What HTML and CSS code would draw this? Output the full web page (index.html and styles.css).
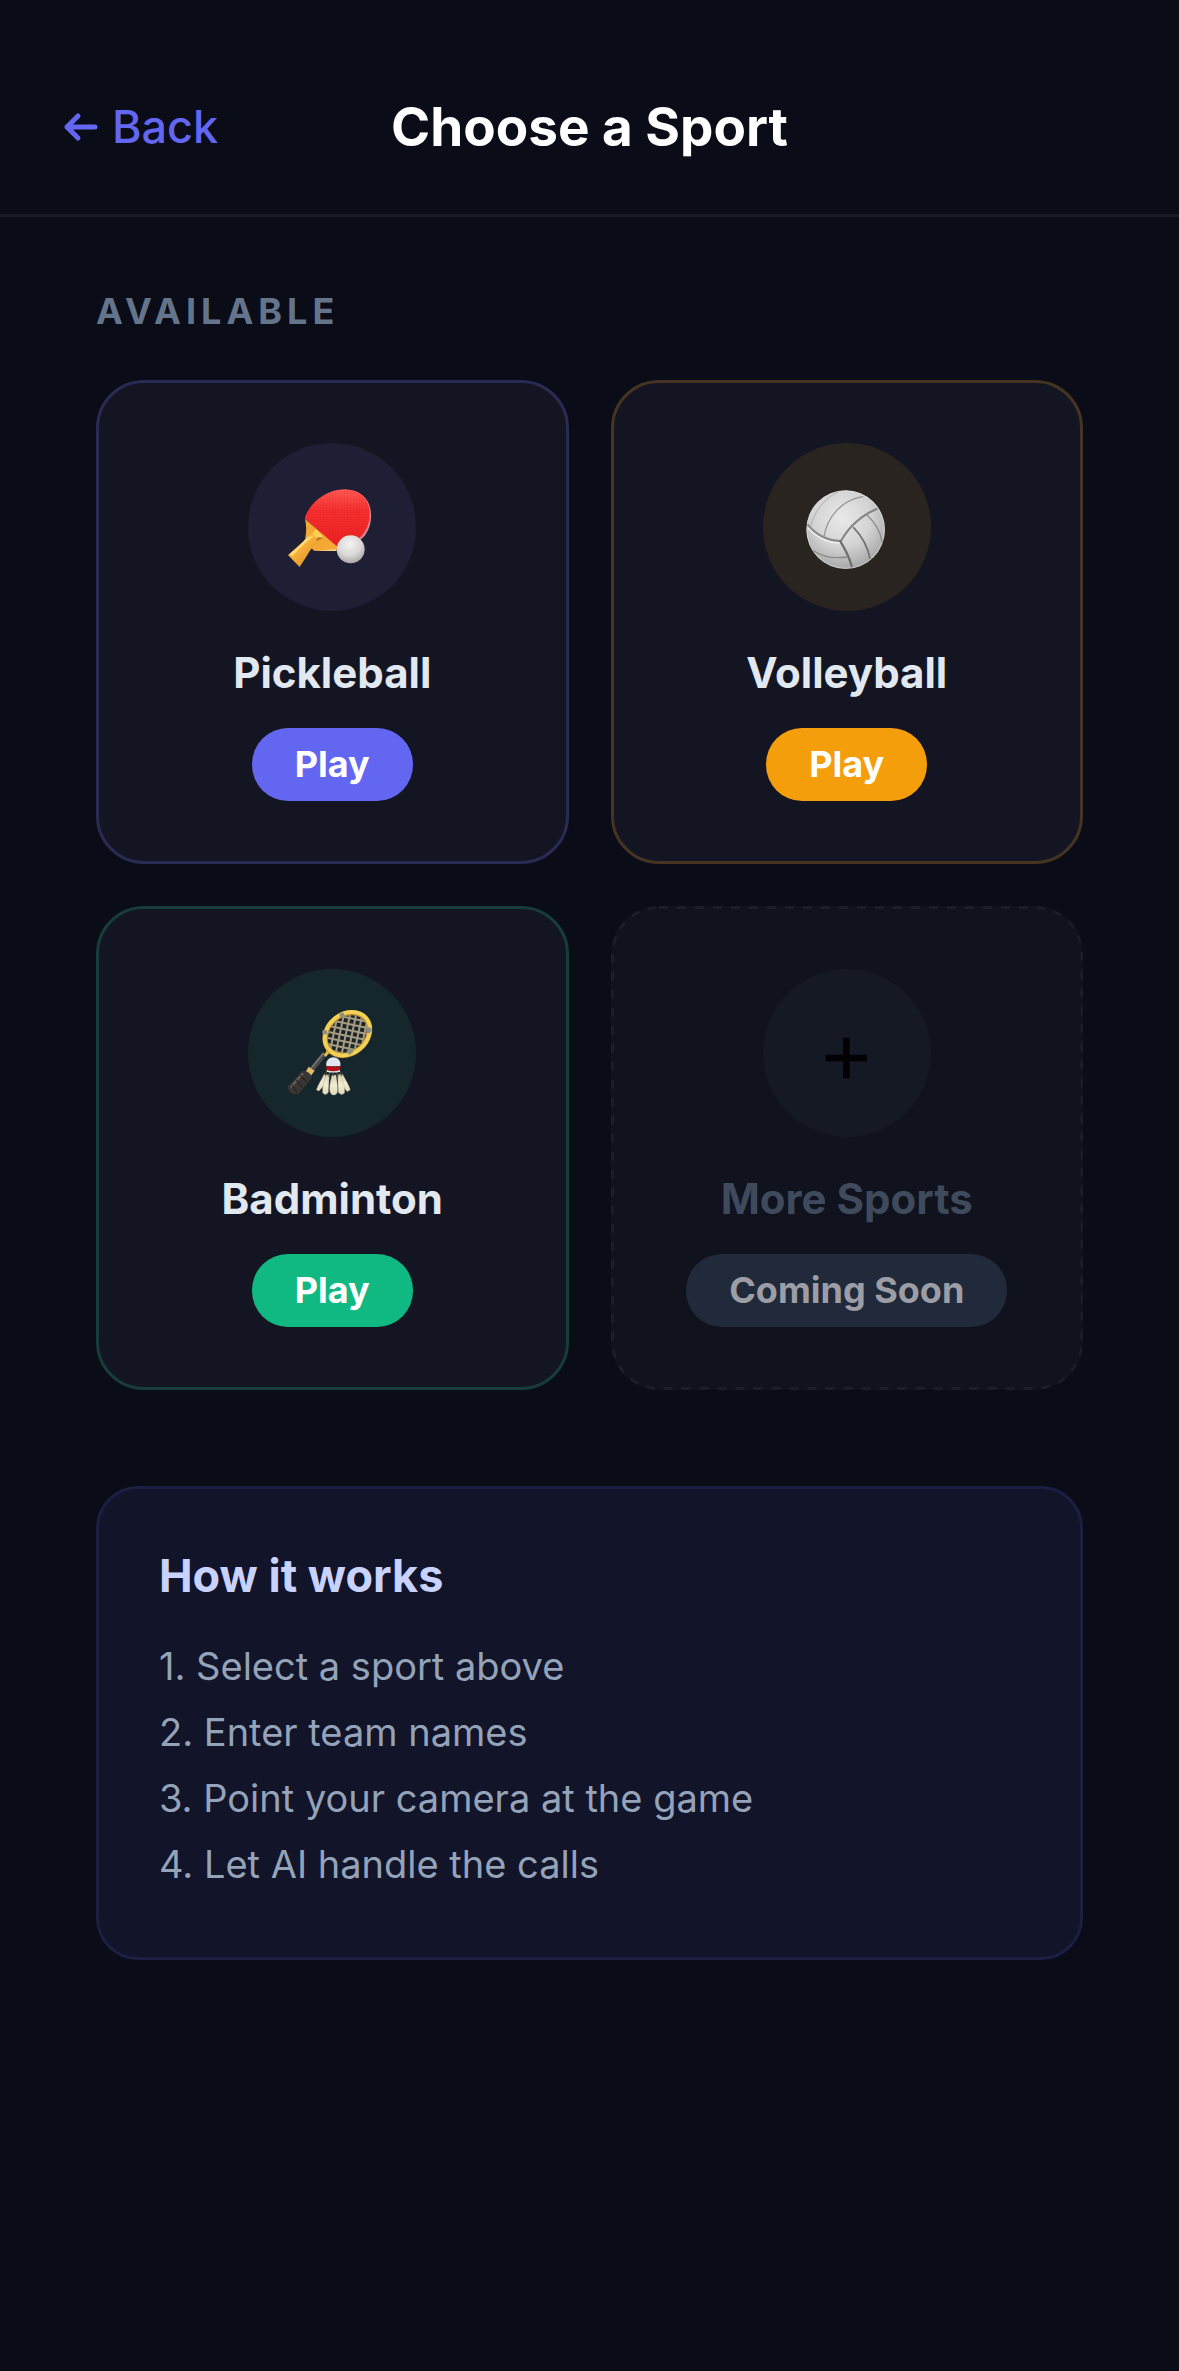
FILE: index.html
```html
<!DOCTYPE html>
<html lang="en">
<head>
    <meta charset="utf-8">
    <meta name="viewport" content="width=device-width, initial-scale=1">
    <title>Choose a Sport</title>
    <link rel="stylesheet" href="styles.css">
</head>
<body>
    <header class="header">
        <a class="back" href="#">
            <svg class="backArrow" viewBox="0 0 36 30" aria-hidden="true">
                <path d="M32 15H4M15 4L4 15L15 26"/>
            </svg>
            <span>Back</span>
        </a>
        <h1 class="title">Choose a Sport</h1>
    </header>
    <main class="content">
        <h2 class="sectionLabel">AVAILABLE</h2>
        <div class="sportGrid">
            <section class="card pickleball">
                <div class="icon">
                    <svg viewBox="54 38 504 504" aria-hidden="true">
                        <defs>
                            <linearGradient id="rubber" x1="0" y1="0" x2="0" y2="1">
                                <stop offset="0" stop-color="#ff5a55"/>
                                <stop offset="0.35" stop-color="#f5302f"/>
                                <stop offset="1" stop-color="#ec1f20"/>
                            </linearGradient>
                            <linearGradient id="wood" x1="0" y1="0" x2="1" y2="1">
                                <stop offset="0" stop-color="#ffd65c"/>
                                <stop offset="0.5" stop-color="#f3a935"/>
                                <stop offset="1" stop-color="#c98024"/>
                            </linearGradient>
                            <radialGradient id="smallBall" cx="0.45" cy="0.3" r="0.7">
                                <stop offset="0" stop-color="#f4f3f2"/>
                                <stop offset="0.6" stop-color="#d9d8d6"/>
                                <stop offset="1" stop-color="#aaa8a5"/>
                            </radialGradient>
                            <pattern id="dots" width="9" height="7" patternUnits="userSpaceOnUse">
                                <rect width="4" height="2" fill="#c9151b" opacity="0.45"/>
                            </pattern>
                        </defs>
                        <path d="M345 178C400 178 426 215 423 263C421 292 410 313 393 327L330 359L228 266C245 217 291 178 345 178Z" fill="#d9868c"/>
                        <path d="M343 177C396 177 422 212 419 258C417 290 402 314 375 336L325 353L224 264C238 217 290 177 343 177Z" fill="url(#rubber)"/>
                        <path d="M343 177C396 177 422 212 419 258C417 290 402 314 375 336L325 353L224 264C238 217 290 177 343 177Z" fill="url(#dots)"/>
                        <path d="M225 266L322 349L319 362L252 361L232 340L226 322C230 302 229 284 225 266Z" fill="#f5a833"/>
                        <path d="M257 303L282 323C258 340 242 354 234 371L209 410L174 374C195 357 214 345 226 325C234 315 246 309 257 303Z" fill="url(#wood)"/>
                        <path d="M258 296L282 322L262 324L246 312Z" fill="#ffd055"/>
                        <path d="M282 322L258 332L263 321Z" fill="#b37420"/>
                        <path d="M179 370L208 344L235 319L253 317C231 331 214 351 187 378Z" fill="#ffd86b"/>
                        <path d="M252 361L319 357L319 362Z" fill="#ffd48b"/>
                        <circle cx="362" cy="357" r="42" fill="url(#smallBall)"/>
                    </svg>
                </div>
                <h3 class="name">Pickleball</h3>
                <button class="playBtn" type="button">Play</button>
            </section>
            <section class="card volleyball">
                <div class="icon">
                    <svg viewBox="39 38 504 504" aria-hidden="true">
                        <defs>
                            <radialGradient id="bigBall" cx="0.45" cy="0.35" r="0.68">
                                <stop offset="0" stop-color="#e9e9e9"/>
                                <stop offset="0.55" stop-color="#d3d3d3"/>
                                <stop offset="1" stop-color="#a3a3a3"/>
                            </radialGradient>
                        </defs>
                        <circle cx="287" cy="298" r="118" fill="url(#bigBall)"/>
                        <circle cx="287" cy="298" r="116" fill="none" stroke="#e0e0e0" stroke-width="3" opacity="0.6"/>
                        <g fill="none" stroke-linecap="round">
                            <path d="M276 338C242 339 202 325 176 293" stroke="#f2f2f2" stroke-width="5"/>
                            <path d="M273 331C296 292 330 257 380 236" stroke="#858585" stroke-width="6"/>
                            <path d="M272 332C235 331 200 315 174 284" stroke="#8a8a8a" stroke-width="6"/>
                            <path d="M271 333C284 354 298 379 305 408" stroke="#707070" stroke-width="7"/>
                            <path d="M222 318C231 264 271 210 338 199" stroke="#979797" stroke-width="4"/>
                            <path d="M182 289C192 247 219 205 266 184" stroke="#b0b0b0" stroke-width="3"/>
                            <path d="M311 292C336 318 353 349 360 384" stroke="#727272" stroke-width="5"/>
                            <path d="M352 255C375 277 391 304 396 334" stroke="#8a8a8a" stroke-width="4"/>
                            <path d="M191 362C222 382 257 385 291 380" stroke="#898989" stroke-width="4"/>
                        </g>
                    </svg>
                </div>
                <h3 class="name">Volleyball</h3>
                <button class="playBtn" type="button">Play</button>
            </section>
            <section class="card badminton">
                <div class="icon">
                    <svg viewBox="54 26 504 504" aria-hidden="true">
                        <defs>
                            <pattern id="strings" width="18" height="18" patternUnits="userSpaceOnUse" patternTransform="rotate(52)">
                                <path d="M0 9H18M9 0V18" fill="none" stroke="#a79d84" stroke-width="6"/>
                            </pattern>
                            <linearGradient id="feather" x1="0" y1="0" x2="0" y2="1">
                                <stop offset="0" stop-color="#d5ceb0"/>
                                <stop offset="0.5" stop-color="#f1edd2"/>
                                <stop offset="1" stop-color="#dfd9b8"/>
                            </linearGradient>
                        </defs>
                        <path d="M284 280L247 326" stroke="#4c4a4b" stroke-width="15"/>
                        <path d="M281 278L243 324" stroke="#817d7b" stroke-width="4"/>
                        <path d="M281 284C291 276 291 265 288 255L312 278C301 276 295 279 288 290Z" fill="#e5bd4e"/>
                        <ellipse cx="352" cy="222" rx="73" ry="56" transform="rotate(-40 352 222)" fill="#1b2426"/>
                        <ellipse cx="351" cy="221" rx="68" ry="52" transform="rotate(-40 351 221)" fill="url(#strings)"/>
                        <ellipse cx="352" cy="221" rx="72" ry="58" transform="rotate(-40 352 221)" fill="none" stroke="#b38932" stroke-width="16"/>
                        <ellipse cx="352" cy="220" rx="73" ry="59" transform="rotate(-40 352 220)" fill="none" stroke="#f2cf55" stroke-width="12"/>
                        <path d="M330 167L342 162M284 222L284 210M353 278L366 269M412 216L421 203" stroke="#8f8c80" stroke-width="14"/>
                        <path d="M236 319L254 331L240 350L225 337Z" fill="#dfbd68"/>
                        <path d="M216 332C228 329 242 339 247 351L207 400C192 407 174 396 173 379Z" fill="#393532"/>
                        <path d="M219 339L182 381" stroke="#68615b" stroke-width="6" fill="none"/>
                        <path d="M210 344L230 365M198 358L216 380M185 373L201 397" stroke="#191818" stroke-width="3" fill="none"/>
                        <g fill="url(#feather)" stroke="#a69f81" stroke-width="1">
                            <path d="M292 343L282 342C276 356 264 374 259 389L267 392C281 379 290 360 295 347Z"/>
                            <path d="M328 342L338 342C345 356 357 374 361 388L352 394C339 382 329 361 325 347Z"/>
                            <path d="M298 342L287 348C281 366 276 383 278 397C284 405 291 403 295 396Z"/>
                            <path d="M323 342L334 348C340 366 345 383 344 397C338 405 330 403 325 396Z"/>
                            <path d="M306 344H318C320 362 326 386 321 399C316 406 306 406 302 399C295 386 302 362 306 344Z"/>
                        </g>
                        <path d="M290 333L286 346M299 333L297 349M310 333V347M321 333L323 349M330 333L335 346" stroke="#4f473b" stroke-width="4"/>
                        <path d="M289 318C286 302 297 291 310 291C323 291 334 302 331 318Z" fill="#e2e6ef"/>
                        <path d="M289 316Q310 322 331 316L330 330Q310 336 290 330Z" fill="#b90d17"/>
                        <path d="M290 329Q310 337 330 329V334Q310 339 290 334Z" fill="#e9e3dd"/>
                    </svg>
                </div>
                <h3 class="name">Badminton</h3>
                <button class="playBtn" type="button">Play</button>
            </section>
            <section class="card more">
                <svg class="dashes" aria-hidden="true">
                    <rect width="100%" height="100%" rx="48"/>
                </svg>
                <div class="icon">
                    <svg viewBox="489 237 504 504" aria-hidden="true">
                        <path d="M677 504H801M739 443V565" stroke="#020206" stroke-width="20"/>
                    </svg>
                </div>
                <h3 class="name">More Sports</h3>
                <button class="playBtn" type="button" disabled>Coming Soon</button>
            </section>
        </div>
        <section class="info">
            <h2 class="infoTitle">How it works</h2>
            <ol class="steps">
                <li>1. Select a sport above</li>
                <li>2. Enter team names</li>
                <li>3. Point your camera at the game</li>
                <li>4. Let AI handle the calls</li>
            </ol>
        </section>
    </main>
</body>
</html>
```
FILE: styles.css
```css
* {
    box-sizing: border-box;
}
body {
    font-family: Inter, "Liberation Sans", sans-serif;
    margin: 0;
    min-height: 100vh;
    background-color: #0a0c18;
    color: #e2e8f0;
}
h1, h2, h3, ol {
    margin: 0;
    padding: 0;
}
.header {
    display: grid;
    grid-template-columns: 1fr auto 1fr;
    align-items: center;
    padding: 94px 63px 54px;
    border-bottom: 3px solid #171924;
}
.back {
    display: flex;
    align-items: center;
    gap: 13px;
    color: #6366f1;
    font-size: 45px;
    font-weight: 500;
    line-height: 54px;
    text-decoration: none;
}
.backArrow {
    width: 36px;
    height: 30px;
    fill: none;
    stroke: currentColor;
    stroke-width: 5;
    stroke-linecap: round;
    stroke-linejoin: round;
}
.title {
    color: white;
    font-size: 53px;
    font-weight: 700;
    line-height: 66px;
}
.content {
    padding: 72px 96px;
}
.sectionLabel {
    margin-bottom: 46px;
    color: #64748b;
    font-size: 36px;
    font-weight: 700;
    line-height: 45px;
    letter-spacing: 5px;
}
.sportGrid {
    display: grid;
    grid-template-columns: 1fr 1fr;
    gap: 42px;
}
.card {
    display: flex;
    flex-direction: column;
    align-items: center;
    padding: 60px;
    border: 3px solid;
    border-radius: 48px;
    background-color: #141522;
}
.icon {
    width: 168px;
    height: 168px;
    margin-bottom: 36px;
    border-radius: 50%;
}
.icon svg {
    display: block;
    width: 100%;
    height: 100%;
}
.name {
    margin-bottom: 30px;
    font-size: 42px;
    font-weight: 700;
    line-height: 51px;
}
.playBtn {
    padding: 15px 43px;
    border: none;
    border-radius: 36px;
    color: white;
    font-family: inherit;
    font-size: 36px;
    font-weight: 700;
    line-height: 43px;
    white-space: nowrap;
}
.pickleball {
    border-color: #2a2b54;
}
.pickleball .icon {
    background-color: #1e1f35;
}
.pickleball .playBtn {
    background-color: #6366f1;
}
.volleyball {
    border-color: #463422;
}
.volleyball .icon {
    background-color: #29241f;
}
.volleyball .playBtn {
    background-color: #f59e0b;
}
.badminton {
    border-color: #173c3b;
}
.badminton .icon {
    background-color: #15262c;
}
.badminton .playBtn {
    background-color: #10b981;
}
/* placeholder card, dashed outline drawn over the edge */
.more {
    position: relative;
    overflow: hidden;
    padding: 63px;
    border: none;
    background-color: #10121d;
}
.dashes {
    position: absolute;
    top: 0;
    left: 0;
    width: 100%;
    height: 100%;
    fill: none;
    stroke: #1b1d27;
    stroke-width: 6;
    stroke-dasharray: 9 9;
}
.more .icon {
    background-color: #151923;
}
.more .name {
    color: #3f4a5d;
}
.more .playBtn {
    background-color: #212a3a;
    color: #9d9da6;
}
.info {
    margin-top: 96px;
    padding: 60px;
    border: 3px solid #1c1e42;
    border-radius: 42px;
    background-color: #12142a;
}
.infoTitle {
    margin-bottom: 30px;
    color: #c7d2fe;
    font-size: 45px;
    font-weight: 700;
    line-height: 54px;
}
.steps {
    list-style: none;
    color: #94a3b8;
    font-size: 38px;
    line-height: 66px;
}
```
